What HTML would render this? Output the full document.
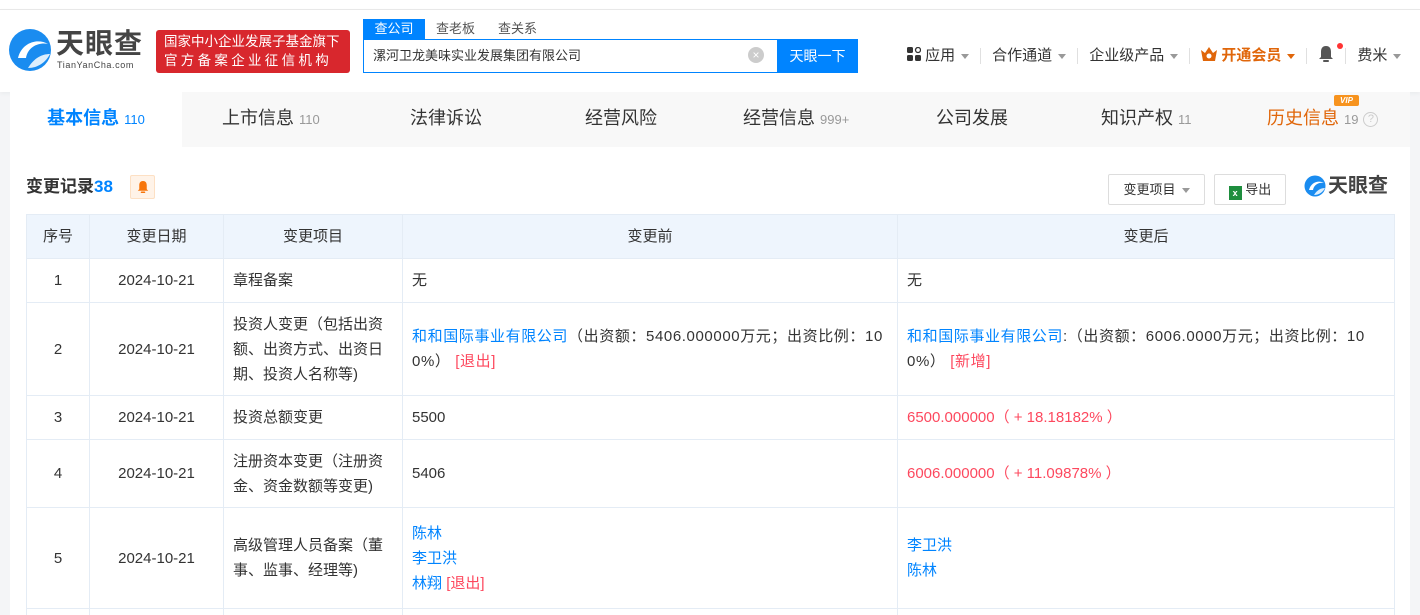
<!DOCTYPE html>
<html><head><meta charset="utf-8"><style>
*{margin:0;padding:0;box-sizing:border-box}
html,body{width:1420px;height:615px;overflow:hidden}
body{background:#f4f5f7;font-family:"Liberation Sans","Noto Sans CJK SC",sans-serif;color:#333;position:relative}
.hdr{position:absolute;left:0;width:1420px;border-top:1px solid #e8e8e8;top:9px;height:83px;background:#fff;box-shadow:0 2px 4px rgba(0,0,0,.04)}
.topw{position:absolute;left:0;top:0;width:1420px;height:9px;background:#fff}
.abs{position:absolute}
.tabs{position:absolute;left:10px;top:92px;width:1400px;height:55px;background:#f8f8f8}
.tab{position:absolute;top:0;height:55px;line-height:52px;font-size:18px;color:#333}
.tab small{font-size:13px;color:#999;margin-left:5px}
.card{position:absolute;left:10px;top:147px;width:1400px;height:468px;background:#fff}
.wrap{position:absolute;left:0;top:0;width:1420px;height:615px;overflow:hidden}
table{position:absolute;left:26px;top:214px;border-collapse:collapse;font-size:15px;width:1368px;table-layout:fixed}
td,th{border:1px solid #e4ecf5;padding:0 9px;vertical-align:middle;line-height:25px;font-weight:normal;color:#333;word-break:break-all}
td.t{letter-spacing:.6px}
th{background:#eef5fd;height:44px;text-align:center}
.c{text-align:center}
.b{color:#0084ff}.r{color:#fd485e}
.sep{display:inline-block;width:1px;height:16px;background:#e0e0e0;vertical-align:middle;margin:0 11px}
.tri{display:inline-block;width:0;height:0;border-left:4px solid transparent;border-right:4px solid transparent;border-top:5px solid #999;vertical-align:middle;margin-left:6px}
</style></head><body><div class="wrap">
<div class="topw"></div>
<div class="hdr"></div>
<svg class="abs" style="left:8px;top:28px" width="44" height="44" viewBox="0 0 44 44"><circle cx="22" cy="22" r="21" fill="#1a8cf0"/><path d="M10 30 C14 14,30 10,40 16 C32 14,20 18,18 30 Z" fill="#fff"/><path d="M20 40 C26 30,34 26,42 26 C38 34,30 40,20 40Z" fill="#fff" opacity=".85"/></svg>
<div class="abs" style="left:56px;top:28px;font-size:28px;font-weight:bold;color:#444;letter-spacing:1px;line-height:32px">天眼查</div>
<div class="abs" style="left:57px;top:60px;font-size:9px;color:#444;letter-spacing:.6px">TianYanCha.com</div>
<div class="abs" style="left:156px;top:30px;width:194px;height:43px;background:#d8272d;border-radius:3px;color:#fff;font-size:13.5px;line-height:19px;padding:2px 0 0 8px">国家中小企业发展子基金旗下<br><span style="letter-spacing:3.3px">官方备案企业征信机构</span></div>
<div class="abs" style="left:363px;top:19px;width:62px;height:20px;background:#0084ff;color:#fff;font-size:13px;text-align:center;line-height:20px">查公司</div>
<div class="abs" style="left:436px;top:19px;font-size:13px;color:#555;line-height:20px">查老板</div>
<div class="abs" style="left:498px;top:19px;font-size:13px;color:#555;line-height:20px">查关系</div>
<div class="abs" style="left:363px;top:39px;width:495px;height:34px;border:1px solid #0084ff;background:#fff"></div>
<div class="abs" style="left:373px;top:46px;font-size:13px;color:#333;line-height:20px">漯河卫龙美味实业发展集团有限公司</div>
<div class="abs" style="left:748px;top:47px;width:16px;height:16px;border-radius:50%;background:#ccc;color:#fff;font-size:12px;line-height:16px;text-align:center">×</div>
<div class="abs" style="left:777px;top:39px;width:81px;height:34px;background:#0084ff;color:#fff;font-size:14px;line-height:34px;text-align:center">天眼一下</div>
<div class="abs" style="left:907px;top:45px;font-size:15px;color:#333;line-height:20px;white-space:nowrap">
<svg width="14" height="14" viewBox="0 0 14 14" style="vertical-align:-1px"><rect x="0" y="0" width="6" height="6" rx="1.5" fill="#333"/><rect x="0" y="8" width="6" height="6" rx="1.5" fill="#333"/><rect x="8" y="8" width="6" height="6" rx="1.5" fill="#333"/><circle cx="11" cy="3" r="2.5" fill="none" stroke="#333" stroke-width="1.3"/></svg> 应用<span class="tri"></span><span class="sep"></span>合作通道<span class="tri"></span><span class="sep"></span>企业级产品<span class="tri"></span><span class="sep"></span><span style="color:#e0660a;font-weight:bold"><svg width="16" height="14" viewBox="0 0 16 14" style="vertical-align:-1px"><path d="M0 3 L4 6 L8 0 L12 6 L16 3 L14 14 L2 14Z" fill="#e0660a"/><circle cx="8" cy="9" r="2.5" fill="#fff"/></svg> 开通会员</span><span class="tri" style="border-top-color:#e0660a"></span><span class="sep"></span><svg width="16" height="18" viewBox="0 0 16 18" style="vertical-align:-3px"><path d="M8 1 C4 1,3 4,3 7 L3 12 L1 14 L15 14 L13 12 L13 7 C13 4,12 1,8 1Z" fill="#555"/><rect x="5" y="15" width="6" height="2" rx="1" fill="#555"/></svg><span class="sep"></span>费米<span class="tri"></span></div>
<div class="abs" style="left:1337px;top:43px;width:6px;height:6px;border-radius:50%;background:#f33"></div>
<div class="tabs">
<div class="tab" style="left:0;width:172px;background:#fff;text-align:center;color:#0084ff;font-weight:bold">基本信息<small style="color:#0084ff;font-weight:normal">110</small></div>
<div class="tab" style="left:212px">上市信息<small>110</small></div>
<div class="tab" style="left:400px">法律诉讼</div>
<div class="tab" style="left:575px">经营风险</div>
<div class="tab" style="left:733px">经营信息<small>999+</small></div>
<div class="tab" style="left:926px">公司发展</div>
<div class="tab" style="left:1091px">知识产权<small>11</small></div>
<div class="tab" style="left:1257px;color:#e0660a">历史信息<small>19</small> <span style="display:inline-block;width:15px;height:15px;border:1.5px solid #ccc;border-radius:50%;font-size:11px;line-height:12px;text-align:center;color:#ccc;vertical-align:middle">?</span></div>
<div class="abs" style="left:1324px;top:3px;width:25px;height:11px;background:#f7931e;color:#fff;font-size:8px;font-style:italic;font-weight:bold;text-align:center;line-height:11px;border-radius:2px">VIP</div>
</div>
<div class="card"></div>
<div class="abs" style="left:26px;top:176px;font-size:17px;font-weight:bold;color:#333;line-height:22px">变更记录<span style="color:#0084ff">38</span></div>
<div class="abs" style="left:130px;top:175px;width:25px;height:24px;background:#fff3e8;border:1px solid #fde0c4;border-radius:2px"><svg width="12" height="14" viewBox="0 0 16 18" style="position:absolute;left:6px;top:4px"><path d="M8 1 C4 1,3 4,3 7 L3 12 L1 14 L15 14 L13 12 L13 7 C13 4,12 1,8 1Z" fill="#f7750a"/><rect x="5" y="15" width="6" height="2" rx="1" fill="#f7750a"/></svg></div>
<div class="abs" style="left:1108px;top:174px;width:97px;height:31px;border:1px solid #ddd;border-radius:2px;font-size:13px;line-height:29px;text-align:center">变更项目<span class="tri"></span></div>
<div class="abs" style="left:1214px;top:174px;width:72px;height:31px;border:1px solid #ddd;border-radius:2px;font-size:13px;line-height:29px;text-align:center"><span style="display:inline-block;width:13px;height:14px;background:#1e8e3e;color:#fff;font-size:9px;line-height:14px;vertical-align:-2px;font-weight:bold">x</span> 导出</div>
<svg class="abs" style="left:1304px;top:175px" width="22" height="22" viewBox="0 0 44 44"><circle cx="22" cy="22" r="21" fill="#1a8cf0"/><path d="M10 30 C14 14,30 10,40 16 C32 14,20 18,18 30 Z" fill="#fff"/><path d="M20 40 C26 30,34 26,42 26 C38 34,30 40,20 40Z" fill="#fff" opacity=".85"/></svg>
<div class="abs" style="left:1328px;top:174px;font-size:20px;font-weight:bold;color:#444;line-height:24px">天眼查</div>
<table>
<colgroup><col style="width:63px"><col style="width:134px"><col style="width:179px"><col style="width:495px"><col style="width:497px"></colgroup>
<tr><th>序号</th><th>变更日期</th><th>变更项目</th><th>变更前</th><th>变更后</th></tr>
<tr style="height:44px"><td class="c">1</td><td class="c">2024-10-21</td><td>章程备案</td><td>无</td><td>无</td></tr>
<tr style="height:93px"><td class="c">2</td><td class="c">2024-10-21</td><td>投资人变更（包括出资额、出资方式、出资日期、投资人名称等)</td><td class="t"><span class="b">和和国际事业有限公司</span>（出资额：5406.000000万元；出资比例：100%） <span class="r">[退出]</span></td><td class="t"><span class="b">和和国际事业有限公司</span>:（出资额：6006.0000万元；出资比例：100%） <span class="r">[新增]</span></td></tr>
<tr style="height:44px"><td class="c">3</td><td class="c">2024-10-21</td><td>投资总额变更</td><td>5500</td><td class="r">6500.000000（ + 18.18182% ）</td></tr>
<tr style="height:68px"><td class="c">4</td><td class="c">2024-10-21</td><td>注册资本变更（注册资金、资金数额等变更)</td><td>5406</td><td class="r">6006.000000（ + 11.09878% ）</td></tr>
<tr style="height:101px"><td class="c">5</td><td class="c">2024-10-21</td><td>高级管理人员备案（董事、监事、经理等)</td><td><span class="b">陈林<br>李卫洪<br>林翔</span> <span class="r">[退出]</span></td><td class="b">李卫洪<br>陈林</td></tr>
<tr style="height:30px"><td></td><td></td><td></td><td></td><td></td></tr>
</table>
</div></body></html>
